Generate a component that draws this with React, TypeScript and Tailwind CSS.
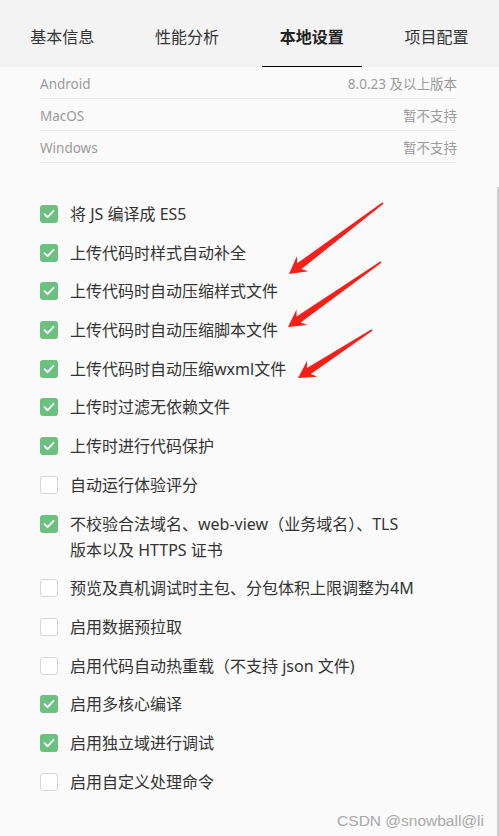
import React from "react";

const tabs = ["基本信息", "性能分析", "本地设置", "项目配置"];

const platforms = [
  { name: "Android", value: "8.0.23 及以上版本" },
  { name: "MacOS", value: "暂不支持" },
  { name: "Windows", value: "暂不支持" },
];

const options: { label: string[]; checked: boolean }[] = [
  { label: ["将 JS 编译成 ES5"], checked: true },
  { label: ["上传代码时样式自动补全"], checked: true },
  { label: ["上传代码时自动压缩样式文件"], checked: true },
  { label: ["上传代码时自动压缩脚本文件"], checked: true },
  { label: ["上传代码时自动压缩wxml文件"], checked: true },
  { label: ["上传时过滤无依赖文件"], checked: true },
  { label: ["上传时进行代码保护"], checked: true },
  { label: ["自动运行体验评分"], checked: false },
  { label: ["不校验合法域名、web-view（业务域名）、TLS", "版本以及 HTTPS 证书"], checked: true },
  { label: ["预览及真机调试时主包、分包体积上限调整为4M"], checked: false },
  { label: ["启用数据预拉取"], checked: false },
  { label: ["启用代码自动热重载（不支持 json 文件)"], checked: false },
  { label: ["启用多核心编译"], checked: true },
  { label: ["启用独立域进行调试"], checked: true },
  { label: ["启用自定义处理命令"], checked: false },
];

const arrows = [
  { x1: 383, y1: 203, x2: 289, y2: 274 },
  { x1: 381, y1: 262, x2: 288, y2: 327 },
  { x1: 372, y1: 330, x2: 298, y2: 378 },
];

function Checkbox({ checked }: { checked: boolean }) {
  if (!checked)
    return <span className="mt-[4px] block h-[18px] w-[18px] shrink-0 rounded-[3px] border border-[#d6d6d6] bg-white" />;
  return (
    <span className="mt-[4px] flex h-[18px] w-[18px] shrink-0 items-center justify-center rounded-[3px] bg-[#6dc180]">
      <svg width="12" height="10" viewBox="0 0 12 10" fill="none">
        <path d="M1.5 5.2 L4.6 8.2 L10.5 1.8" stroke="white" strokeWidth="1.8" strokeLinecap="round" strokeLinejoin="round" />
      </svg>
    </span>
  );
}

function Arrow({ x1, y1, x2, y2 }: { x1: number; y1: number; x2: number; y2: number }) {
  const L = Math.hypot(x2 - x1, y2 - y1);
  const angle = (Math.atan2(y2 - y1, x2 - x1) * 180) / Math.PI;
  const pts = [
    [0, -0.8],
    [L - 13, -3.6],
    [L - 17, -9.5],
    [L, 0],
    [L - 17, 9.5],
    [L - 13, 3.6],
    [0, 0.8],
  ]
    .map((p) => p.join(","))
    .join(" ");
  return (
    <g transform={`translate(${x1} ${y1}) rotate(${angle})`}>
      <polygon points={pts} fill="#f5201a" />
    </g>
  );
}

export default function App() {
  return (
    <div
      className="relative h-[836px] w-[499px] overflow-hidden bg-[#fafafa]"
      style={{ fontFamily: '"Noto Sans", "Noto Sans CJK SC", sans-serif' }}
    >
      {/* tabs */}
      <div className="flex h-[67px] bg-[#f3f3f3]">
        {tabs.map((t, i) => (
          <div key={t} className="flex w-[125px] justify-center">
            <div
              className={`flex w-[100px] items-center justify-center pt-[8px] pb-[1px] text-[16px] ${
                i === 2 ? "border-b border-black font-bold text-[#222]" : "text-[#333]"
              }`}
            >
              {t}
            </div>
          </div>
        ))}
      </div>

      {/* platform support */}
      <div className="px-[40px] pr-[42px]">
        {platforms.map((p) => (
          <div
            key={p.name}
            className="flex justify-between border-b border-[#ececec] pt-[8px] pb-[5px] text-[13.5px] leading-[18px] text-[#9a9a9a]"
          >
            <span>{p.name}</span>
            <span>{p.value}</span>
          </div>
        ))}
      </div>

      {/* options */}
      <div className="flex flex-col gap-[12.7px] px-[40px] pt-[38px]">
        {options.map((o, i) => (
          <div key={i} className="flex gap-[12px] text-[16px] leading-[26px] text-[#333]">
            <Checkbox checked={o.checked} />
            <div>
              {o.label.map((l) => (
                <div key={l}>{l}</div>
              ))}
            </div>
          </div>
        ))}
      </div>

      {/* scrollbar */}
      <div className="absolute right-0 top-[187px] bottom-0 w-[2px] bg-[#cfcfcf]" />

      {/* annotation arrows */}
      <svg className="pointer-events-none absolute left-0 top-0" width="499" height="836">
        {arrows.map((a, i) => (
          <Arrow key={i} {...a} />
        ))}
      </svg>

      {/* watermark */}
      <div
        className="absolute bottom-[5px] right-[15px] text-[15.5px] leading-[20px] text-[#a8a8a8]"
        style={{ fontFamily: '"Liberation Sans", Arial, sans-serif' }}
      >
        CSDN @snowball@li
      </div>
    </div>
  );
}
